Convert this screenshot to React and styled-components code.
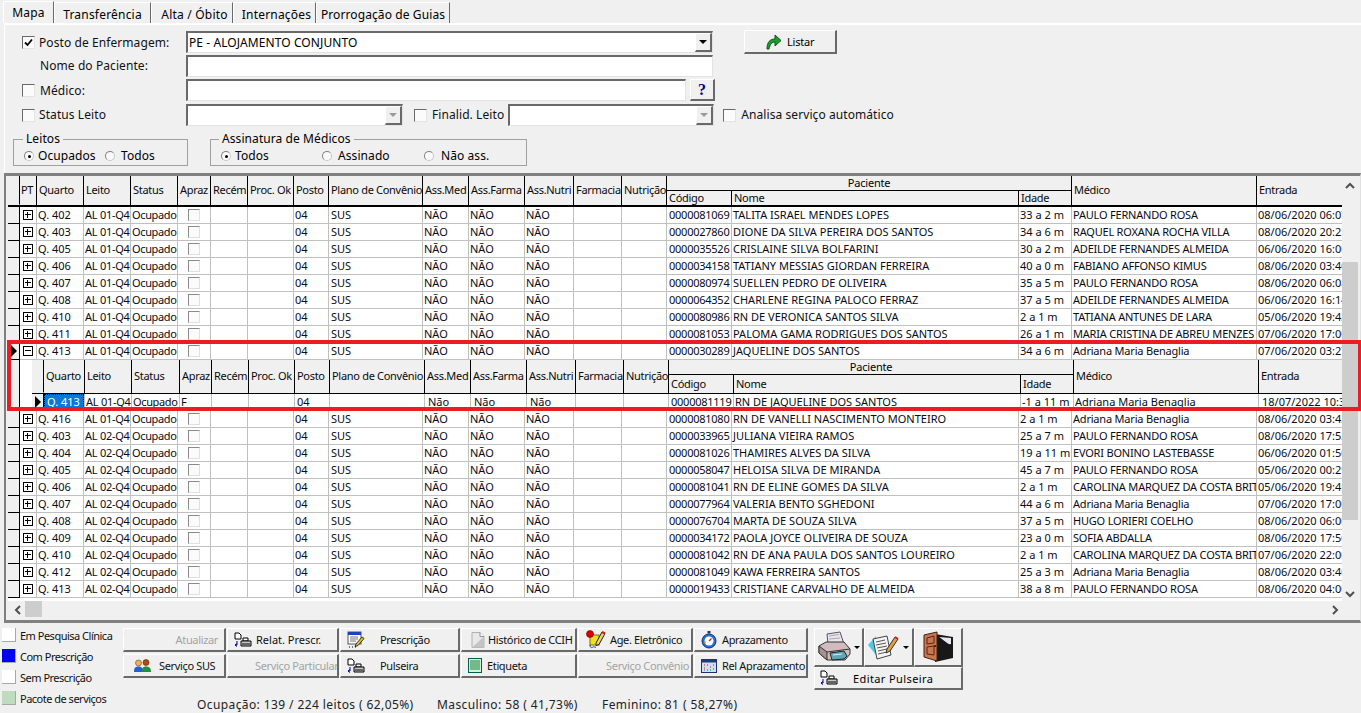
import React from 'react';
import styled, { createGlobalStyle } from 'styled-components';

const Global = createGlobalStyle`
  html, body { margin: 0; padding: 0; background: #f0f0f0; }
  body { font-family: "Noto Sans", "Open Sans", "Liberation Sans", sans-serif; color: #000; overflow: hidden; }
  * { box-sizing: border-box; }
`;

const MAIN_COLS = '12px 17px 47px 47px 47px 33px 37px 46px 35px 94px 46px 56px 49px 48px 45px 65px 287px 53px 185px 86px';
const NEST_COLS = '12px 41px 47px 48px 32px 37px 46px 35px 95px 46px 56px 49px 48px 45px 65px 287px 53px 185px 86px';
const FORM_SPACING = '0.08px';

const Page = styled.div`
  position: relative;
  width: 1361px;
  height: 713px;
  overflow: hidden;
  background: #f0f0f0;
  font-size: 12px;
  display: flex;
  flex-direction: column;
`;

/* Tabs */
const TabBar = styled.div`
  display: flex;
  height: 23px;
  padding-left: 3px;
  align-items: flex-end;
`;
const Tab = styled.div`
  width: ${p => p.$w}px;
  height: ${p => (p.$active ? 22 : 21)}px;
  padding-top: ${p => (p.$active ? 2 : 3)}px;
  padding-left: ${p => p.$pl || 0}px;
  text-align: center;
  font-size: 12px;
  letter-spacing: ${p => p.$ls ?? 0.2}px;
  line-height: 17px;
  white-space: nowrap;
  background: #f0f0f0;
  border-right: 1px solid #696969;
  border-left: 1px solid #fff;
  border-top: 1px solid #fff;
`;

/* Filter form */
const FormPanel = styled.div`
  height: 150px;
  margin-left: 4px;
  border-top: 2px solid #fff;
  border-left: 1px solid #fff;
  padding: 6px 0 0 0;
  display: flex;
  flex-direction: column;
`;
const FormRow = styled.div`
  display: flex;
  align-items: center;
  height: ${p => p.$h || 22}px;
  margin-bottom: ${p => p.$gap ?? 2}px;
  padding-left: 17px;
`;
const LabelCol = styled.div`
  width: 164px;
  display: flex;
  align-items: center;
  flex-shrink: 0;
`;
const Check = styled.span`
  width: 13px;
  height: 13px;
  flex-shrink: 0;
  display: inline-flex;
  align-items: center;
  justify-content: center;
  background: #fbfbfb;
  border-top: 1px solid #696969;
  border-left: 1px solid #696969;
  border-right: 1px solid #e4e4e4;
  border-bottom: 1px solid #e4e4e4;
  margin-left: ${p => p.$ml || 0}px;
`;
const FieldLabel = styled.span`
  margin-left: ${p => p.$ml ?? 4}px;
  margin-top: ${p => p.$up ? -2 : 0}px;
  letter-spacing: ${FORM_SPACING};
  white-space: nowrap;
  color: #111;
`;
const Field = styled.div`
  width: ${p => p.$w}px;
  height: ${p => p.$h || 22}px;
  flex-shrink: 0;
  background: #fff;
  border-top: 2px solid #696969;
  border-left: 2px solid #696969;
  border-right: 1px solid #e3e3e3;
  border-bottom: 1px solid #e3e3e3;
  display: flex;
  align-items: center;
  justify-content: space-between;
  padding-left: 1px;
  letter-spacing: ${FORM_SPACING};
  margin-left: ${p => p.$ml || 0}px;
`;
const DropBtn = styled.div`
  width: 17px;
  height: 100%;
  background: #f0f0f0;
  border-top: 1px solid #fff;
  border-left: 1px solid #fff;
  border-right: 2px solid #696969;
  border-bottom: 2px solid #696969;
  display: flex;
  align-items: center;
  justify-content: center;
`;
const Arrow = styled.span`
  width: 0;
  height: 0;
  border-left: 4px solid transparent;
  border-right: 4px solid transparent;
  border-top: 4px solid ${p => (p.$off ? '#9a9a9a' : '#000')};
`;
const RaisedBtn = styled.div`
  background: #f0f0f0;
  border-top: 1px solid #fff;
  border-left: 1px solid #fff;
  border-right: 2px solid #696969;
  border-bottom: 2px solid #696969;
  display: flex;
  align-items: center;
  flex-shrink: 0;
`;
const ListarBtn = styled(RaisedBtn)`
  width: 93px;
  height: 24px;
  margin-left: 31px;
  margin-top: -1px;
  justify-content: flex-start;
  padding-left: 20px;
  gap: 5px;
  font-size: 11px;
  letter-spacing: -0.2px;
`;
const HelpBtn = styled(RaisedBtn)`
  width: 25px;
  height: 22px;
  margin-left: 4px;
  justify-content: center;
  color: #000080;
  font: bold 16px "Liberation Serif", serif;
`;
const GroupRow = styled.div`
  display: flex;
  gap: 22px;
  padding-left: 8px;
  margin-top: 13px;
`;
const Group = styled.div`
  width: ${p => p.$w}px;
  height: 27px;
  border: 1px solid #a0a0a0;
  position: relative;
`;
const Legend = styled.span`
  position: absolute;
  top: -9px;
  left: ${p => p.$l || 10}px;
  background: #f0f0f0;
  padding: 0 3px;
  line-height: 16px;
  letter-spacing: ${FORM_SPACING};
  white-space: nowrap;
`;
const RadioWrap = styled.span`
  position: absolute;
  left: ${p => p.$l}px;
  top: 8px;
  display: flex;
  align-items: center;
  line-height: 16px;
  letter-spacing: ${FORM_SPACING};
  white-space: nowrap;
`;
const RadioDot = styled.span`
  width: 10px;
  height: 10px;
  border-radius: 50%;
  background: #fafafa;
  border: 1px solid #c8c8c8;
  border-top-color: #808080;
  border-left-color: #808080;
  margin-right: ${p => p.$mr ?? 5}px;
  display: inline-flex;
  align-items: center;
  justify-content: center;
`;
const RadioPip = styled.span`
  width: 3px;
  height: 3px;
  border-radius: 50%;
  background: #000;
`;

/* Grid */
const GridFrame = styled.div`
  margin-left: 4px;
  width: 1357px;
  height: 450px;
  flex-shrink: 0;
  border-top: 3px solid #808080;
  border-left: 2px solid #808080;
  border-bottom: 3px solid #808080;
  border-right: 1px solid #e0e0e0;
  padding-left: 2px;
  display: grid;
  grid-template-columns: 1334px 16px;
  grid-template-rows: 425px 17px;
`;
const Viewport = styled.div`
  overflow: hidden;
  background: #fff;
  position: relative;
`;
const HeadRow = styled.div`
  display: grid;
  grid-template-columns: ${p => p.$cols};
  height: ${p => p.$h}px;
  width: 1360px;
  background: #f0f0f0;
  border-bottom: ${p => p.$line}px solid #000;
`;
const HeadCell = styled.div`
  border-right: 1px solid ${p => (p.$noLine ? 'transparent' : '#000')};
  padding-left: ${p => p.$pad ?? 2}px;
  padding-bottom: 1px;
  display: flex;
  align-items: center;
  font-size: 11px;
  line-height: 12px;
  letter-spacing: -0.3px;
  white-space: nowrap;
  overflow: hidden;
  color: #0a0a0a;
`;
const PacienteHead = styled.div`
  grid-column: span 3;
  display: grid;
  grid-template-rows: 15px 1fr;
  border-right: 1px solid #000;
`;
const PacienteTitle = styled.div`
  text-align: center;
  font-size: 11px;
  line-height: 14px;
  letter-spacing: -0.2px;
  border-bottom: 1px solid #000;
`;
const PacienteSub = styled.div`
  display: grid;
  grid-template-columns: 65px 287px 1fr;
`;
const Row = styled.div`
  display: grid;
  grid-template-columns: ${p => p.$cols};
  height: 17px;
  width: 1360px;
`;
const Cell = styled.div`
  border-right: 1px solid #c0c0c0;
  border-bottom: 1px solid #c0c0c0;
  padding-left: ${p => p.$pad ?? 1}px;
  font-size: 11px;
  line-height: 16px;
  letter-spacing: ${p => p.$ls ?? 0}px;
  white-space: nowrap;
  overflow: hidden;
  color: #0a0a14;
  display: flex;
  align-items: center;
`;
const Indicator = styled.div`
  background: #f0f0f0;
  border-right: 1px solid #000;
  border-bottom: 1px solid ${p => (p.$plain ? '#f0f0f0' : '#000')};
  display: flex;
  align-items: center;
  justify-content: center;
`;
const Pointer = styled.span`
  width: 0;
  height: 0;
  border-top: 6px solid transparent;
  border-bottom: 6px solid transparent;
  border-left: 6px solid #000;
`;
const ExpandCell = styled(Cell)`
  padding-left: 3px;
`;
const Expander = styled.span`
  width: 10px;
  height: 10px;
  border: 1px solid #000;
  background: #fff;
  position: relative;
  display: block;
  &::before { content: ''; position: absolute; left: 1px; right: 1px; top: 3px; height: 1px; background: #000; }
  &::after { content: ${p => (p.$open ? 'none' : "''")}; position: absolute; top: 1px; bottom: 1px; left: 3px; width: 1px; background: #000; }
`;
const CenterCell = styled(Cell)`
  justify-content: center;
  padding-left: 0;
`;
const SmallCheck = styled.span`
  width: 12px;
  height: 12px;
  background: #fbfbfb;
  border-top: 1px solid #8a8a8a;
  border-left: 1px solid #8a8a8a;
  border-right: 1px solid #e0e0e0;
  border-bottom: 1px solid #e0e0e0;
`;
const Selected = styled.span`
  background: #0a78d7;
  color: #fff;
  outline: 1px dotted #000;
  outline-offset: -1px;
  width: 100%;
  height: 100%;
  display: block;
  padding-left: 3px;
`;
const SelectedCell = styled(Cell)`
  padding: 0;
`;
const NestedWrap = styled.div`
  display: flex;
  height: 51px;
  width: 1360px;
`;
const NestedGutter = styled.div`
  width: 24px;
  flex-shrink: 0;
  display: grid;
  grid-template-columns: 12px 12px;
`;
const GutterCell = styled.div`
  background: ${p => (p.$white ? '#fff' : '#f0f0f0')};
  border-right: ${p => (p.$white ? '0' : '1px solid #000')};
`;
const NestedGrid = styled.div`
  flex: 1;
  min-width: 0;
`;

/* Scrollbars */
const VScroll = styled.div`
  background: #f0f0f0;
  position: relative;
  display: flex;
  flex-direction: column;
  align-items: center;
  justify-content: space-between;
  padding: 6px 0 3px;
`;
const VThumb = styled.div`
  position: absolute;
  top: 86px;
  left: 0;
  width: 16px;
  height: 258px;
  background: #cdcdcd;
`;
const HScroll = styled.div`
  background: #f0f0f0;
  position: relative;
  display: flex;
  align-items: center;
  justify-content: space-between;
  padding: 0 3px 0 6px;
`;
const HThumb = styled.div`
  position: absolute;
  left: 17px;
  top: 0;
  width: 17px;
  height: 16px;
  background: #cdcdcd;
`;
const Corner = styled.div`
  background: #f0f0f0;
`;

/* Red annotation */
const Highlight = styled.div`
  position: absolute;
  left: 7px;
  top: 340px;
  width: 1354px;
  height: 71px;
  border: 4px solid #ed1c24;
  border-right-width: 3px;
  pointer-events: none;
`;

/* Footer */
const Footer = styled.div`
  flex: 1;
  display: flex;
  padding-top: 5px;
  position: relative;
`;
const LegendCol = styled.div`
  width: 123px;
  flex-shrink: 0;
  padding-left: 2px;
  display: flex;
  flex-direction: column;
  gap: 7px;
`;
const LegendItem = styled.div`
  display: flex;
  align-items: center;
  height: 14px;
  font-size: 11px;
  letter-spacing: -0.5px;
  white-space: nowrap;
  gap: 4px;
  color: #111;
`;
const Swatch = styled.span`
  width: 14px;
  height: 14px;
  flex-shrink: 0;
  background: ${p => p.$c};
  border-right: 1px solid #a8a8a8;
  border-bottom: 1px solid #a8a8a8;
`;
const ActionsArea = styled.div`
  display: flex;
  flex-direction: column;
  flex-shrink: 0;
`;
const ButtonGrid = styled.div`
  display: grid;
  grid-template-columns: 104px 113px 121px 117px 116px 115px;
  grid-auto-rows: 24px;
  row-gap: 2px;
`;
const ActionBtn = styled(RaisedBtn)`
  font-size: 11px;
  letter-spacing: ${p => p.$ls ?? -0.35}px;
  white-space: nowrap;
  color: ${p => (p.$off ? '#a3a3a3' : '#111')};
  justify-content: ${p => p.$j || 'flex-start'};
  padding-left: ${p => p.$pl ?? 6}px;
  padding-right: ${p => p.$pr ?? 0}px;
  gap: ${p => p.$g ?? 4}px;
  overflow: hidden;
  margin-right: 1px;
`;
const StatusLine = styled.div`
  display: flex;
  margin-top: 18px;
  margin-left: 74px;
  font-size: 12px;
  letter-spacing: 0.4px;
  white-space: nowrap;
  color: #222;
`;
const StatusItem = styled.span`
  width: ${p => p.$w}px;
`;
const BigBtns = styled.div`
  margin-left: 5px;
  width: 149px;
  display: grid;
  grid-template-columns: 50px 50px 49px;
  grid-template-rows: 39px 23px;
`;
const BigBtn = styled(RaisedBtn)`
  justify-content: center;
  gap: 3px;
`;
const WideBtn = styled(RaisedBtn)`
  grid-column: span 3;
  font-size: 11px;
  letter-spacing: 0.4px;
  padding-left: 5px;
  gap: 15px;
`;
const SmallArrow = styled.span`
  width: 0;
  height: 0;
  border-left: 3px solid transparent;
  border-right: 3px solid transparent;
  border-top: 3px solid #000;
`;

/* Icons */
const IconListar = () => (
  <svg width="17" height="17" viewBox="0 0 17 17">
    <path d="M2 16 C2 9 5 6 10 6 L10 2 L16 7.500 L10 13 L10 9 C7 9 5 11 4 16 Z" fill="#1f9a2e" stroke="#0b5a14" strokeWidth="1" />
  </svg>
);
const IconPrintDoc = () => (
  <svg width="18" height="16" viewBox="0 0 18 16">
    <path d="M1 1h4l2 2v4H1z" fill="#fff" stroke="#000" />
    <path d="M3 9v4H1M1 13l2-1.500M1 13l2 1.500" fill="none" stroke="#0000a0" />
    <path d="M9 6h5v3H9z" fill="#fff" stroke="#000" />
    <path d="M7 9h10v5H7z" fill="#c8c8c8" stroke="#000" />
    <path d="M8 12h8" stroke="#000" />
  </svg>
);
const IconPrescricao = () => (
  <svg width="18" height="18" viewBox="0 0 18 18">
    <rect x="1" y="1" width="13" height="12" fill="#fff" stroke="#555" />
    <rect x="1" y="1" width="13" height="3" fill="#2040c0" />
    <path d="M3 6h8M3 8h8M3 10h6" stroke="#777" />
    <path d="M9 13l6-7 2 1.500-6 7-3 1z" fill="#e8c020" stroke="#333" />
    <path d="M2 16h1M5 16h1M8 16h1" stroke="#000" />
  </svg>
);
const IconPeople = () => (
  <svg width="17" height="14" viewBox="0 0 17 14">
    <circle cx="4.500" cy="4" r="3" fill="#f0b060" stroke="#704010" strokeWidth=".6" />
    <path d="M0 13c0-5 2-5.500 4.500-5.500S9 8 9 13z" fill="#2060d0" />
    <circle cx="12" cy="3.500" r="3" fill="#b04a10" stroke="#602000" strokeWidth=".6" />
    <path d="M8 13c0-5 1.500-5.500 4-5.500S17 8 17 13z" fill="#209040" />
  </svg>
);
const IconDoc = () => (
  <svg width="14" height="16" viewBox="0 0 14 16">
    <path d="M1 .5h8l4 4v11H1z" fill="#e8e8e8" stroke="#b0b0b0" />
    <path d="M1 15.500 13 4.500v11z" fill="#c4c4c4" />
    <path d="M9 .5v4h4" fill="#fff" stroke="#909090" />
  </svg>
);
const IconAge = () => (
  <svg width="21" height="20" viewBox="0 0 21 20">
    <rect x="5" y="5" width="9" height="10" fill="#f0e020" stroke="#707000" />
    <circle cx="5" cy="4" r="3.500" fill="#e00000" stroke="#600000" strokeWidth=".6" />
    <path d="M11 13 17 2l3 1.500-6 11-3 1z" fill="#f0d070" stroke="#222" />
    <path d="M17 2l3 1.500" stroke="#c02020" strokeWidth="2" />
    <path d="M5 15c0 3 2 3 3 2s2 1 3 0" fill="none" stroke="#2030c0" />
  </svg>
);
const IconClock = () => (
  <svg width="16" height="18" viewBox="0 0 16 18">
    <rect x="6.500" y="0" width="3" height="2.500" fill="#303060" />
    <circle cx="8" cy="10" r="7" fill="#2a70d0" stroke="#103070" />
    <circle cx="8" cy="10" r="4.500" fill="#fff" />
    <path d="M8 10 10.500 7.500" stroke="#d02010" strokeWidth="1.300" />
    <path d="M3 11h2" stroke="#f09020" strokeWidth="1.500" />
  </svg>
);
const IconEtiqueta = () => (
  <svg width="14" height="15" viewBox="0 0 14 15">
    <rect x=".5" y=".5" width="13" height="14" fill="#d8f0d8" stroke="#006050" />
    <path d="M2 3h10M2 5h10M2 7h10M2 9h10M2 11h10" stroke="#108040" />
  </svg>
);
const IconRel = () => (
  <svg width="16" height="14" viewBox="0 0 16 14">
    <rect x=".5" y=".5" width="15" height="13" fill="#cfe0f4" stroke="#203070" />
    <rect x=".5" y=".5" width="15" height="3" fill="#203880" />
    <path d="M3 6h1M6 6h1M9 8h1M12 6h1M3 9h1M6 11h1M12 10h1" stroke="#c02020" />
    <path d="M9 11h1M3 11h1" stroke="#208040" />
  </svg>
);
const IconPrinter = () => (
  <svg width="33" height="32" viewBox="0 0 33 32">
    <path d="M9 3 22 1l4 12H10z" fill="#e8e4f0" stroke="#555" />
    <path d="M11 5l10-1.500M11 8l11-1" stroke="#aaa" />
    <path d="M1 15l7-4h18l6 7v5l-5 6H9l-8-7z" fill="#d0bcbc" stroke="#333" />
    <path d="M1 15v7l8 7V21z" fill="#a89090" stroke="#333" />
    <path d="M9 21l23-3" fill="none" stroke="#333" />
    <path d="M12 22l14-2 3 5-3 3-12 1z" fill="#5aa8b8" stroke="#222" />
    <path d="M15 24l9-1" stroke="#d8f0f4" />
  </svg>
);
const IconNotes = () => (
  <svg width="32" height="30" viewBox="0 0 32 30">
    <path d="M0 13 8 4v19z" fill="#50c8e8" />
    <path d="M5 7 19 4l4 19-14 4z" fill="#f4f4f4" stroke="#444" />
    <path d="M8 10l9-2M8 13l10-2M9 16l10-2M10 19l9-2M10 22l9-2" stroke="#555" />
    <path d="M19 17 27 5l3 2-8 12-4 2z" fill="#e0a040" stroke="#333" />
    <path d="M27 5l3 2" stroke="#d02020" strokeWidth="2" />
  </svg>
);
const IconDoor = () => (
  <svg width="32" height="32" viewBox="0 0 32 32">
    <path d="M13 3 31 6v21l-18 4z" fill="#181818" />
    <path d="M17 6c5 3 9 8 12 7v-6z" fill="#e8e8f0" />
    <path d="M2 4 15 1v29L2 26z" fill="#c87850" stroke="#402010" />
    <path d="M5 7l7-2v7l-7 1zM5 16l7-1v9l-7-1z" fill="none" stroke="#602010" />
    <circle cx="13" cy="15" r="1" fill="#201000" />
  </svg>
);
const Chevron = ({ d }) => {
  const paths = {
    up: 'M1 6 5 2 9 6', down: 'M1 2 5 6 9 2', left: 'M6 1 2 5 6 9', right: 'M2 1 6 5 2 9',
  };
  const vert = d === 'up' || d === 'down';
  return (
    <svg width={vert ? 10 : 8} height={vert ? 8 : 10} viewBox={vert ? '0 0 10 8' : '0 0 8 10'}>
      <path d={paths[d]} fill="none" stroke="#505050" strokeWidth="2" />
    </svg>
  );
};

const HEADS = ['Quarto', 'Leito', 'Status', 'Apraz', 'Recém', 'Proc. Ok', 'Posto', 'Plano de Convênio', 'Ass.Med', 'Ass.Farma', 'Ass.Nutri', 'Farmacia', 'Nutrição'];

const TOP = [
  ['Q. 402', '01', '0000081069', 'TALITA ISRAEL MENDES LOPES', '33 a 2 m', 'PAULO FERNANDO ROSA', '08/06/2020 06:07'],
  ['Q. 403', '01', '0000027860', 'DIONE DA SILVA PEREIRA DOS SANTOS', '34 a 6 m', 'RAQUEL ROXANA ROCHA VILLA', '08/06/2020 20:25'],
  ['Q. 405', '01', '0000035526', 'CRISLAINE SILVA BOLFARINI', '30 a 2 m', 'ADEILDE FERNANDES ALMEIDA', '06/06/2020 16:00'],
  ['Q. 406', '01', '0000034158', 'TATIANY MESSIAS GIORDAN FERREIRA', '40 a 0 m', 'FABIANO AFFONSO KIMUS', '08/06/2020 03:40'],
  ['Q. 407', '01', '0000080974', 'SUELLEN PEDRO DE OLIVEIRA', '35 a 5 m', 'PAULO FERNANDO ROSA', '08/06/2020 06:08'],
  ['Q. 408', '01', '0000064352', 'CHARLENE REGINA PALOCO FERRAZ', '37 a 5 m', 'ADEILDE FERNANDES ALMEIDA', '06/06/2020 16:14'],
  ['Q. 410', '01', '0000080986', 'RN DE VERONICA SANTOS SILVA', '2 a 1 m', 'TATIANA ANTUNES DE LARA', '05/06/2020 19:43'],
  ['Q. 411', '01', '0000081053', 'PALOMA GAMA RODRIGUES DOS SANTOS', '26 a 1 m', 'MARIA CRISTINA DE ABREU MENZES', '07/06/2020 17:00'],
];
const OPEN = ['Q. 413', '01', '0000030289', 'JAQUELINE DOS SANTOS', '34 a 6 m', 'Adriana Maria Benaglia', '07/06/2020 03:27'];
const BOTTOM = [
  ['Q. 416', '01', '0000081080', 'RN DE VANELLI NASCIMENTO MONTEIRO', '2 a 1 m', 'Adriana Maria Benaglia', '08/06/2020 03:43'],
  ['Q. 403', '02', '0000033965', 'JULIANA VIEIRA RAMOS', '25 a 7 m', 'PAULO FERNANDO ROSA', '08/06/2020 17:52'],
  ['Q. 404', '02', '0000081026', 'THAMIRES ALVES DA SILVA', '19 a 11 m', 'EVORI BONINO LASTEBASSE', '06/06/2020 01:50'],
  ['Q. 405', '02', '0000058047', 'HELOISA SILVA DE MIRANDA', '45 a 7 m', 'PAULO FERNANDO ROSA', '05/06/2020 00:29'],
  ['Q. 406', '02', '0000081041', 'RN DE ELINE GOMES DA SILVA', '2 a 1 m', 'CAROLINA MARQUEZ DA COSTA BRITO', '05/06/2020 19:45'],
  ['Q. 407', '02', '0000077964', 'VALERIA BENTO SGHEDONI', '44 a 6 m', 'Adriana Maria Benaglia', '07/06/2020 17:00'],
  ['Q. 408', '02', '0000076704', 'MARTA DE SOUZA SILVA', '37 a 5 m', 'HUGO LORIERI COELHO', '08/06/2020 06:00'],
  ['Q. 409', '02', '0000034172', 'PAOLA JOYCE OLIVEIRA DE SOUZA', '23 a 0 m', 'SOFIA ABDALLA', '08/06/2020 17:50'],
  ['Q. 410', '02', '0000081042', 'RN DE ANA PAULA DOS SANTOS LOUREIRO', '2 a 1 m', 'CAROLINA MARQUEZ DA COSTA BRITO', '07/06/2020 22:00'],
  ['Q. 412', '02', '0000081049', 'KAWA FERREIRA SANTOS', '25 a 3 m', 'Adriana Maria Benaglia', '08/06/2020 03:40'],
  ['Q. 413', '02', '0000019433', 'CRISTIANE CARVALHO DE ALMEIDA', '38 a 8 m', 'PAULO FERNANDO ROSA', '08/06/2020 04:00'],
];

const Header = ({ cols, nested }) => (
  <HeadRow $cols={cols} $h={nested ? 34 : 31} $line={nested ? 1 : 2}>
    <Indicator $plain />
    {!nested && <HeadCell $pad={1}>PT</HeadCell>}
    {HEADS.map(h => <HeadCell key={h}>{h}</HeadCell>)}
    <PacienteHead>
      <PacienteTitle>Paciente</PacienteTitle>
      <PacienteSub>
        <HeadCell>Código</HeadCell>
        <HeadCell>Nome</HeadCell>
        <HeadCell $noLine>Idade</HeadCell>
      </PacienteSub>
    </PacienteHead>
    <HeadCell>Médico</HeadCell>
    <HeadCell>Entrada</HeadCell>
  </HeadRow>
);

const BedRow = ({ d, pointer, open }) => (
  <Row $cols={MAIN_COLS}>
    <Indicator>{pointer && <Pointer />}</Indicator>
    <ExpandCell><Expander $open={open} /></ExpandCell>
    <Cell>{d[0]}</Cell>
    <Cell $ls={-0.25}>{`AL ${d[1]}-Q4`}</Cell>
    <Cell $ls={-0.35}>Ocupado</Cell>
    <CenterCell><SmallCheck /></CenterCell>
    <Cell />
    <Cell />
    <Cell>04</Cell>
    <Cell $pad={2}>SUS</Cell>
    <Cell>NÃO</Cell>
    <Cell>NÃO</Cell>
    <Cell>NÃO</Cell>
    <Cell />
    <Cell />
    <Cell $pad={2} $ls={-0.25}>{d[2]}</Cell>
    <Cell>{d[3]}</Cell>
    <Cell>{d[4]}</Cell>
    <Cell $ls={-0.2}>{d[5]}</Cell>
    <Cell>{d[6]}</Cell>
  </Row>
);

const RadioItem = ({ l, on, mr, children }) => (
  <RadioWrap $l={l}>
    <RadioDot $mr={mr}>{on && <RadioPip />}</RadioDot>
    {children}
  </RadioWrap>
);

export default function App() {
  return (
    <Page>
      <Global />
      <TabBar>
        <Tab $active $w={51}>Mapa</Tab>
        <Tab $w={97}>Transferência</Tab>
        <Tab $w={82} $pl={5}>Alta / Óbito</Tab>
        <Tab $w={83} $pl={4}>Internações</Tab>
        <Tab $w={134} $ls={0.1}>Prorrogação de Guias</Tab>
      </TabBar>

      <FormPanel>
        <FormRow>
          <LabelCol>
            <Check><svg width="9" height="9" viewBox="0 0 9 9"><path d="M1 4.500 3.500 7 8 1.500" fill="none" stroke="#000" strokeWidth="1.800" /></svg></Check>
            <FieldLabel>Posto de Enfermagem:</FieldLabel>
          </LabelCol>
          <Field $w={527}>
            PE - ALOJAMENTO CONJUNTO
            <DropBtn><Arrow /></DropBtn>
          </Field>
          <ListarBtn><IconListar />Listar</ListarBtn>
        </FormRow>
        <FormRow>
          <LabelCol><FieldLabel $ml={18} $up>Nome do Paciente:</FieldLabel></LabelCol>
          <Field $w={527} />
        </FormRow>
        <FormRow $gap={3}>
          <LabelCol><Check /><FieldLabel $ml={5}>Médico:</FieldLabel></LabelCol>
          <Field $w={500} />
          <HelpBtn>?</HelpBtn>
        </FormRow>
        <FormRow $gap={0}>
          <LabelCol><Check /><FieldLabel $up>Status Leito</FieldLabel></LabelCol>
          <Field $w={217}>
            <span />
            <DropBtn><Arrow $off /></DropBtn>
          </Field>
          <Check $ml={11} />
          <FieldLabel $ml={5} $up>Finalid. Leito</FieldLabel>
          <Field $w={206} $ml={4}>
            <span />
            <DropBtn><Arrow $off /></DropBtn>
          </Field>
          <Check $ml={9} />
          <FieldLabel $ml={5} $up>Analisa serviço automático</FieldLabel>
        </FormRow>
        <GroupRow>
          <Group $w={175}>
            <Legend $l={9}>Leitos</Legend>
            <RadioItem l={10} on mr={4}>Ocupados</RadioItem>
            <RadioItem l={91} mr={6}>Todos</RadioItem>
          </Group>
          <Group $w={317}>
            <Legend $l={8}>Assinatura de Médicos</Legend>
            <RadioItem l={10} on mr={4}>Todos</RadioItem>
            <RadioItem l={111} mr={6}>Assinado</RadioItem>
            <RadioItem l={213} mr={7}>Não ass.</RadioItem>
          </Group>
        </GroupRow>
      </FormPanel>

      <GridFrame>
        <Viewport>
          <Header cols={MAIN_COLS} />
          {TOP.map((d, i) => <BedRow key={i} d={d} />)}
          <BedRow d={OPEN} pointer open />
          <NestedWrap>
            <NestedGutter>
              <GutterCell />
              <GutterCell $white />
            </NestedGutter>
            <NestedGrid>
              <Header cols={NEST_COLS} nested />
              <Row $cols={NEST_COLS}>
                <Indicator $plain><Pointer /></Indicator>
                <SelectedCell><Selected>Q. 413</Selected></SelectedCell>
                <Cell $ls={-0.25}>AL 01-Q4</Cell>
                <Cell $ls={-0.35}>Ocupado</Cell>
                <Cell>F</Cell>
                <Cell />
                <Cell />
                <Cell $pad={2}>04</Cell>
                <Cell />
                <Cell $pad={3}>Não</Cell>
                <Cell $pad={3}>Não</Cell>
                <Cell $pad={3}>Não</Cell>
                <Cell />
                <Cell />
                <Cell $pad={2} $ls={-0.25}>0000081119</Cell>
                <Cell>RN DE JAQUELINE DOS SANTOS</Cell>
                <Cell>-1 a 11 m</Cell>
                <Cell>Adriana Maria Benaglia</Cell>
                <Cell $pad={3}>18/07/2022 10:35</Cell>
              </Row>
            </NestedGrid>
          </NestedWrap>
          {BOTTOM.map((d, i) => <BedRow key={i} d={d} />)}
        </Viewport>
        <VScroll>
          <VThumb />
          <Chevron d="up" />
          <Chevron d="down" />
        </VScroll>
        <HScroll>
          <HThumb />
          <Chevron d="left" />
          <Chevron d="right" />
        </HScroll>
        <Corner />
      </GridFrame>

      <Footer>
        <LegendCol>
          <LegendItem><Swatch $c="#ffffff" />Em Pesquisa Clínica</LegendItem>
          <LegendItem><Swatch $c="#0000f0" />Com Prescrição</LegendItem>
          <LegendItem><Swatch $c="#ffffff" />Sem Prescrição</LegendItem>
          <LegendItem><Swatch $c="#c0dcc0" />Pacote de serviços</LegendItem>
        </LegendCol>
        <ActionsArea>
          <ButtonGrid>
            <ActionBtn $off $j="flex-end" $pr={6}>Atualizar</ActionBtn>
            <ActionBtn $ls={0}><IconPrintDoc />Relat. Prescr.</ActionBtn>
            <ActionBtn $g={15}><IconPrescricao />Prescrição</ActionBtn>
            <ActionBtn $pl={9} $g={3}><IconDoc />Histórico de CCIH</ActionBtn>
            <ActionBtn $pl={6}><IconAge />Age. Eletrônico</ActionBtn>
            <ActionBtn $g={5}><IconClock />Aprazamento</ActionBtn>
            <ActionBtn $pl={10} $g={8}><IconPeople />Serviço SUS</ActionBtn>
            <ActionBtn $off $pl={27}>Serviço Particular</ActionBtn>
            <ActionBtn $g={15}><IconPrintDoc />Pulseira</ActionBtn>
            <ActionBtn $g={5}><IconEtiqueta />Etiqueta</ActionBtn>
            <ActionBtn $off $j="flex-end" $pr={2}>Serviço Convênio</ActionBtn>
            <ActionBtn $g={5}><IconRel />Rel Aprazamento</ActionBtn>
          </ButtonGrid>
          <StatusLine>
            <StatusItem $w={240}>Ocupação: 139 / 224 leitos ( 62,05%)</StatusItem>
            <StatusItem $w={165}>Masculino: 58 ( 41,73%)</StatusItem>
            <StatusItem $w={160}>Feminino: 81 ( 58,27%)</StatusItem>
          </StatusLine>
        </ActionsArea>
        <BigBtns>
          <BigBtn><IconPrinter /><SmallArrow /></BigBtn>
          <BigBtn><IconNotes /><SmallArrow /></BigBtn>
          <BigBtn><IconDoor /></BigBtn>
          <WideBtn><IconPrintDoc /><span>Editar Pulseira</span></WideBtn>
        </BigBtns>
      </Footer>
      <Highlight />
    </Page>
  );
}
